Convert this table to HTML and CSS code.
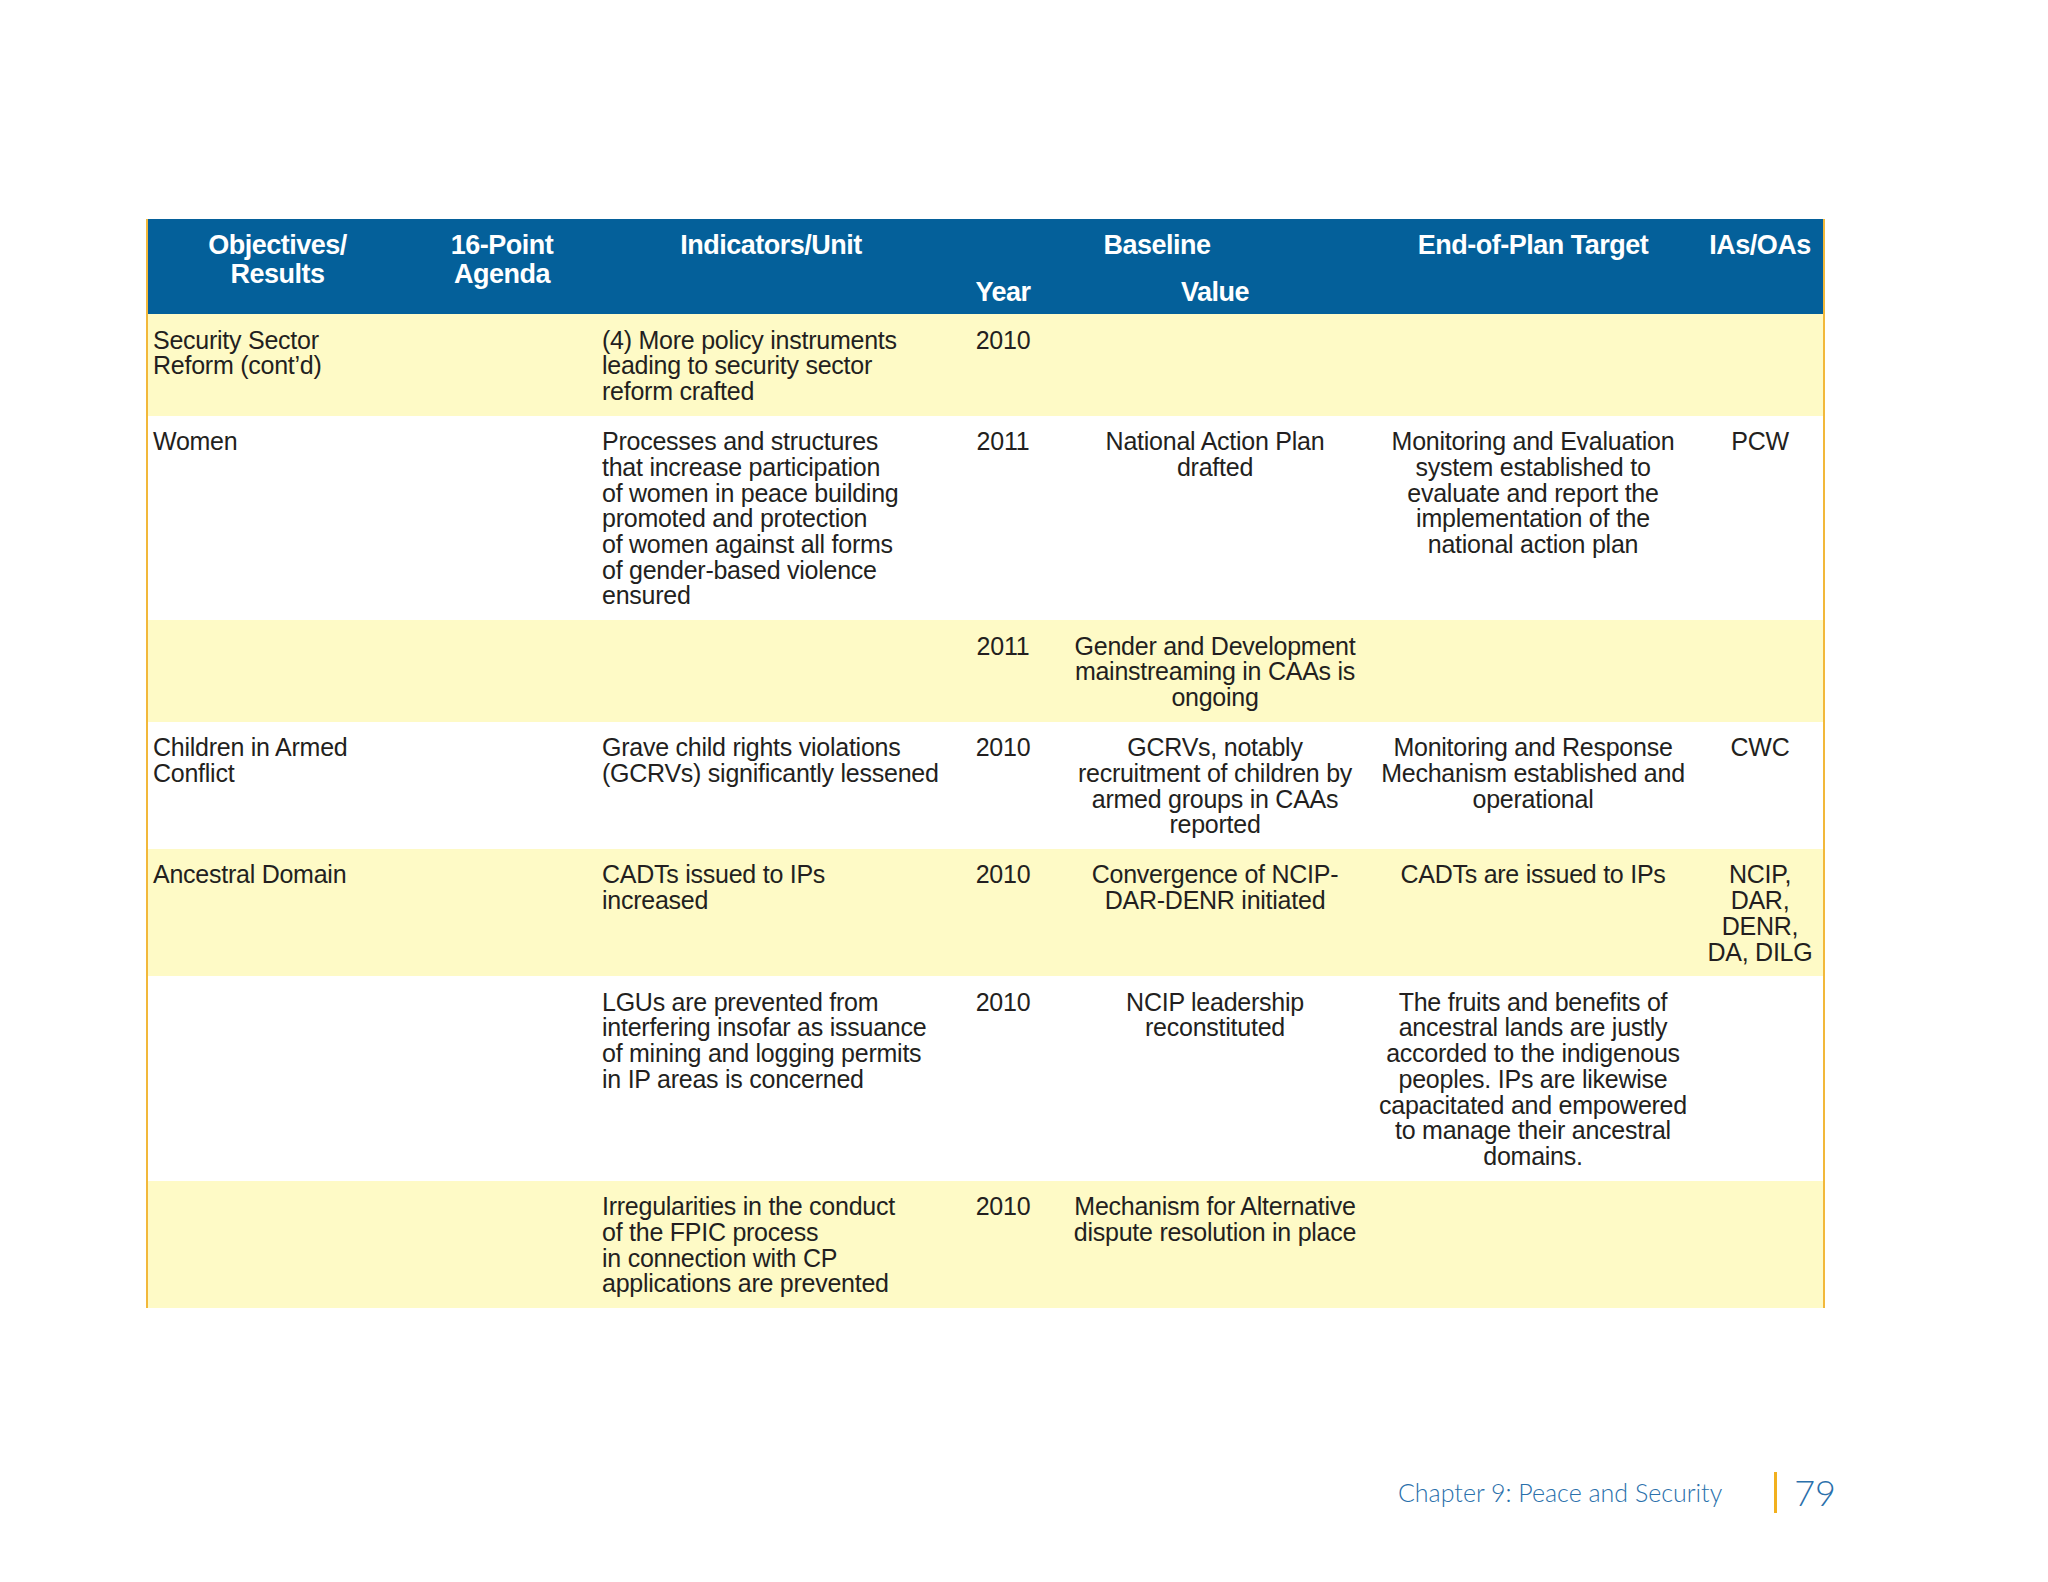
FILE: index.html
```html
<!DOCTYPE html>
<html lang="en">
<head>
<meta charset="utf-8">
<title>Chapter 9: Peace and Security</title>
<link rel="stylesheet" href="styles.css">
</head>
<body>
<div class="page">
  <div class="table">
    <div class="head">
      <div class="h h-obj">Objectives/<br>Results</div>
      <div class="h h-agenda">16-Point<br>Agenda</div>
      <div class="h h-ind">Indicators/Unit</div>
      <div class="h h-base">Baseline</div>
      <div class="h h-target">End-of-Plan Target</div>
      <div class="h h-ias">IAs/OAs</div>
      <div class="h h-year">Year</div>
      <div class="h h-value">Value</div>
    </div>

    <div class="row yellow">
      <div class="c">Security Sector<br>Reform (cont’d)</div>
      <div class="c"></div>
      <div class="c">(4) More policy instruments<br>leading to security sector<br>reform crafted</div>
      <div class="c ctr">2010</div>
      <div class="c ctr"></div>
      <div class="c ctr"></div>
      <div class="c ctr"></div>
    </div>

    <div class="row">
      <div class="c">Women</div>
      <div class="c"></div>
      <div class="c">Processes and structures<br>that increase participation<br>of women in peace building<br>promoted and protection<br>of women against all forms<br>of gender-based violence<br>ensured</div>
      <div class="c ctr">2011</div>
      <div class="c ctr">National Action Plan<br>drafted</div>
      <div class="c ctr">Monitoring and Evaluation<br>system established to<br>evaluate and report the<br>implementation of the<br>national action plan</div>
      <div class="c ctr">PCW</div>
    </div>

    <div class="row yellow">
      <div class="c"></div>
      <div class="c"></div>
      <div class="c"></div>
      <div class="c ctr">2011</div>
      <div class="c ctr">Gender and Development<br>mainstreaming in CAAs is<br>ongoing</div>
      <div class="c ctr"></div>
      <div class="c ctr"></div>
    </div>

    <div class="row">
      <div class="c">Children in Armed<br>Conflict</div>
      <div class="c"></div>
      <div class="c">Grave child rights violations<br>(GCRVs) significantly lessened</div>
      <div class="c ctr">2010</div>
      <div class="c ctr">GCRVs, notably<br>recruitment of children by<br>armed groups in CAAs<br>reported</div>
      <div class="c ctr">Monitoring and Response<br>Mechanism established and<br>operational</div>
      <div class="c ctr">CWC</div>
    </div>

    <div class="row yellow">
      <div class="c">Ancestral Domain</div>
      <div class="c"></div>
      <div class="c">CADTs issued to IPs<br>increased</div>
      <div class="c ctr">2010</div>
      <div class="c ctr">Convergence of NCIP-<br>DAR-DENR initiated</div>
      <div class="c ctr">CADTs are issued to IPs</div>
      <div class="c ctr">NCIP,<br>DAR,<br>DENR,<br>DA, DILG</div>
    </div>

    <div class="row">
      <div class="c"></div>
      <div class="c"></div>
      <div class="c">LGUs are prevented from<br>interfering insofar as issuance<br>of mining and logging permits<br>in IP areas is concerned</div>
      <div class="c ctr">2010</div>
      <div class="c ctr">NCIP leadership<br>reconstituted</div>
      <div class="c ctr">The fruits and benefits of<br>ancestral lands are justly<br>accorded to the indigenous<br>peoples. IPs are likewise<br>capacitated and empowered<br>to manage their ancestral<br>domains.</div>
      <div class="c ctr"></div>
    </div>

    <div class="row yellow">
      <div class="c"></div>
      <div class="c"></div>
      <div class="c">Irregularities in the conduct<br>of the FPIC process<br>in connection with CP<br>applications are prevented</div>
      <div class="c ctr">2010</div>
      <div class="c ctr">Mechanism for Alternative<br>dispute resolution in place</div>
      <div class="c ctr"></div>
      <div class="c ctr"></div>
    </div>
  </div>

  <div class="footer">
    <span class="chapter">Chapter 9: Peace and Security</span>
    <span class="bar"></span>
    <span class="pageno">79</span>
  </div>
</div>
</body>
</html>
```

FILE: styles.css
```css
html, body {
  margin: 0;
  padding: 0;
  background: #ffffff;
}

.page {
  width: 2048px;
  height: 1582px;
  padding-top: 219px;
  box-sizing: border-box;
}

.table {
  margin-left: 146px;
  width: 1679px;
  box-sizing: border-box;
  border-left: 2px solid #f2b83a;
  border-right: 2px solid #f2b83a;
}

.head,
.row {
  display: grid;
  grid-template-columns: 259px 190px 348px 116px 308px 328px 126px;
}

.head {
  background: #04609a;
  color: #ffffff;
  grid-template-rows: 47px 29px;
  padding: 12px 0 7px;
  font-family: "Liberation Sans", Arial, sans-serif;
  font-weight: 700;
  font-size: 27px;
  letter-spacing: -0.5px;
  line-height: 29px;
  text-align: center;
}

.h-obj { grid-column: 1; grid-row: 1 / span 2; }
.h-agenda { grid-column: 2; grid-row: 1 / span 2; }
.h-ind { grid-column: 3; grid-row: 1 / span 2; }
.h-base { grid-column: 4 / span 2; grid-row: 1; }
.h-target { grid-column: 6; grid-row: 1 / span 2; }
.h-ias { grid-column: 7; grid-row: 1 / span 2; }
.h-year { grid-column: 4; grid-row: 2; }
.h-value { grid-column: 5; grid-row: 2; }

.row {
  background: #ffffff;
  color: #231f20;
  font-family: "Liberation Sans", Arial, sans-serif;
  font-size: 25px;
  letter-spacing: -0.25px;
  line-height: 25.7px;
}

.row.yellow {
  background: #fefac6;
}

.c {
  padding: 13.5px 5px 11px;
  white-space: nowrap;
}

.c.ctr {
  text-align: center;
}

.footer {
  display: flex;
  justify-content: flex-end;
  align-items: center;
  height: 44px;
  margin-top: 162px;
  padding-right: 212px;
  font-family: Lato, "Open Sans", sans-serif;
  font-weight: 300;
  color: #2a70ab;
}

.chapter {
  font-size: 25px;
}

.bar {
  width: 3px;
  height: 41px;
  background: #f2b01e;
  margin-left: 52px;
}

.pageno {
  font-size: 36px;
  margin-left: 17px;
}
```
